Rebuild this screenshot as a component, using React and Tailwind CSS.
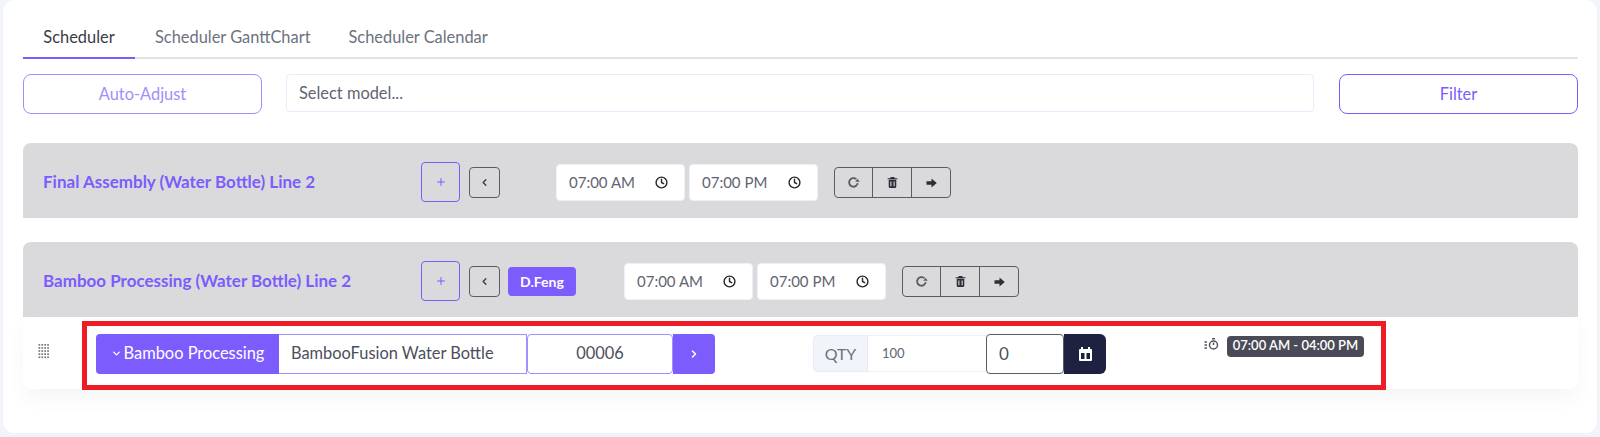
import React from "react";
import { Clock, ChevronLeft, ChevronDown, ChevronRight, Plus } from "lucide-react";
import { BiSolidTrash } from "react-icons/bi";

const font = "font-['Lato','Noto_Sans',sans-serif]";

function TimeInput({ value }) {
  return (
    <div className="flex h-[37px] w-[129px] items-center justify-between rounded border border-[#eef0f7] bg-white pl-3 pr-4 text-[15px] text-[#5f6470]">
      <span>{value}</span>
      <Clock size={13} strokeWidth={2.6} className="text-[#26262b]" />
    </div>
  );
}

function LinePanel({ title, assignee }) {
  return (
    <div className="flex h-[75px] items-center rounded-t-lg bg-[#dadadc] pl-5 pt-1">
      <div className="mb-0.5 w-[378px] text-[17px] font-bold text-[#7c5cfc]">{title}</div>
      <button className="mb-0.5 flex h-10 w-[39px] items-center justify-center rounded border border-[#7c5cfc]">
        <Plus size={12} className="text-[#7c5cfc]" />
      </button>
      <button className="ml-[9px] flex h-[31px] w-[31px] items-center justify-center rounded border border-[#5b5b66]">
        <ChevronLeft size={11} strokeWidth={3} className="text-[#3b3b46]" />
      </button>
      {assignee ? (
        <div className="ml-2 mr-[48px] flex h-[29px] w-[68px] items-center justify-center rounded bg-[#7c5cfc] text-sm font-bold text-white">
          {assignee}
        </div>
      ) : (
        <div className="w-14" />
      )}
      <div className="flex gap-1">
        <TimeInput value="07:00 AM" />
        <TimeInput value="07:00 PM" />
      </div>
      <div className="ml-4 flex h-[31px] divide-x divide-[#5b5b66] rounded border border-[#5b5b66] text-[#2e2e3a]">
        <button className="flex w-[38px] items-center justify-center">
          <svg width="13" height="13" viewBox="0 0 12 12" fill="none">
            <path d="M9.9 6.6A4 4 0 1 1 8.6 2.9" stroke="#5b5b66" strokeWidth="1.7" />
            <path d="M7.6 5.4h4.2L9.7 2.6z" fill="#5b5b66" />
          </svg>
        </button>
        <button className="flex w-[39px] items-center justify-center">
          <BiSolidTrash size={13} />
        </button>
        <button className="flex w-[38px] items-center justify-center">
          <svg width="11" height="10" viewBox="0 0 11 10" fill="currentColor">
            <path d="M0.5 3.2h5V0.6L10.8 5 5.5 9.4V6.8h-5z" />
          </svg>
        </button>
      </div>
    </div>
  );
}

function DragDots() {
  return (
    <svg width="12" height="15" viewBox="0 0 12 15" className="mb-[3px] text-[#777782]" fill="currentColor">
      {[0, 1, 2, 3, 4].map((r) =>
        [0, 1, 2, 3].map((c) => <rect key={`${r}-${c}`} x={c * 2.9 + 0.5} y={r * 3.1} width="1.7" height="1.7" />)
      )}
    </svg>
  );
}

export default function App() {
  return (
    <div className={`${font} h-[437px] bg-[#f1f5f9] pl-[3px] pr-[3px] pb-1`}>
      <div className="h-full rounded-xl bg-white pl-5 pr-[19px]">
        <div className="flex h-[59px] items-end border-b-2 border-[#e4e4e7]">
          <div className="-mb-0.5 flex h-[40px] w-[112px] justify-center border-b-2 border-[#7c5cfc] pt-1.5 text-[16.4px] text-[#3b3b46]">Scheduler</div>
          <div className="ml-5 h-[40px] pt-2 text-[16.4px] text-[#6b7280]">Scheduler GanttChart</div>
          <div className="ml-[38px] h-[40px] pt-2 text-[16.4px] text-[#6b7280]">Scheduler Calendar</div>
        </div>
        <div className="mt-[15px] flex items-start">
          <button className="h-10 w-[239px] rounded-lg border border-[#a48dfd] text-[16.4px] text-[#a48dfd]">Auto-Adjust</button>
          <div className="ml-6 flex h-[38px] w-[1028px] items-center rounded border border-[#eceafa] pl-3 text-[16.4px] text-[#5f6470]">Select model...</div>
          <button className="ml-[25px] h-10 w-[239px] rounded-lg border border-[#7c5cfc] text-[16.4px] text-[#7c5cfc]">Filter</button>
        </div>
        <div className="mt-[29px]">
          <LinePanel title="Final Assembly (Water Bottle) Line 2" />
        </div>
        <div className="mt-6">
          <LinePanel title="Bamboo Processing (Water Bottle) Line 2" assignee="D.Feng" />
        </div>
        <div className="flex h-[72px] items-center rounded-b-lg bg-white pl-[15px] shadow-[0_10px_20px_rgba(0,0,0,0.04)]">
          <DragDots />
          <div className="ml-[32px] mt-1 flex h-[69px] w-[1304px] items-start border-[5px] border-[#ee1c25] pl-[9px] pt-2">
            <div className="flex h-10 w-[619px] text-[16.4px]">
              <div className="flex w-[183px] items-center justify-center gap-0.5 rounded-l bg-[#7c5cfc] text-white">
                <ChevronDown size={11} strokeWidth={3} />
                Bamboo Processing
              </div>
              <div className="flex w-[248px] items-center border-y border-r border-[#a48dfd] pl-3 text-[#4b4f5a]">BambooFusion Water Bottle</div>
              <div className="flex w-[146px] items-center justify-center rounded border border-[#a48dfd] text-[#4b4f5a]">00006</div>
              <div className="flex w-[42px] items-center justify-center rounded-r bg-[#7c5cfc] text-white"><ChevronRight size={12} strokeWidth={3} /></div>
            </div>
            <div className="ml-[98px] flex h-10 items-center">
              <div className="flex h-[37px] w-[55px] items-center justify-center rounded-l border border-[#e7ecf3] bg-[#f1f5f9] text-base text-[#6b7280]">QTY</div>
              <div className="flex h-[37px] w-[118px] items-center border-y border-[#eef0f7] pl-3.5 text-[13px] text-[#5f6470]">100</div>
              <div className="flex h-10 w-[78px] items-center rounded border border-[#5b5b66] pl-3 text-[17px] text-[#4b4f5a]">0</div>
              <div className="flex h-10 w-[42px] items-center justify-center rounded-r-md bg-[#1f2140] text-white">
                <svg width="13" height="14" viewBox="0 0 13 14" fill="currentColor">
                  <path d="M2 0h2v2h5V0h2v2h1a1 1 0 0 1 1 1v10a1 1 0 0 1-1 1H1a1 1 0 0 1-1-1V3a1 1 0 0 1 1-1h1zM2 6v6h3.5V6zM7.5 6v6H11V6z" fillRule="evenodd" />
                </svg>
              </div>
            </div>
            <div className="ml-[98px] flex items-center gap-2 pt-0.5">
              <svg width="15" height="12" viewBox="0 0 15 12" fill="none" stroke="#55555f" strokeWidth="1.5" className="mb-1">
                <circle cx="9.5" cy="7" r="4" />
                <path d="M8 0.8h3M9.5 7V4.5M0.5 4h2.5M0.5 7h2.5M0.5 10h2.5" />
              </svg>
              <div className="flex h-[21px] w-[137px] items-center justify-center rounded bg-[#4b4b58] text-[13px] font-semibold text-white">07:00 AM - 04:00 PM</div>
            </div>
          </div>
        </div>
      </div>
    </div>
  );
}
